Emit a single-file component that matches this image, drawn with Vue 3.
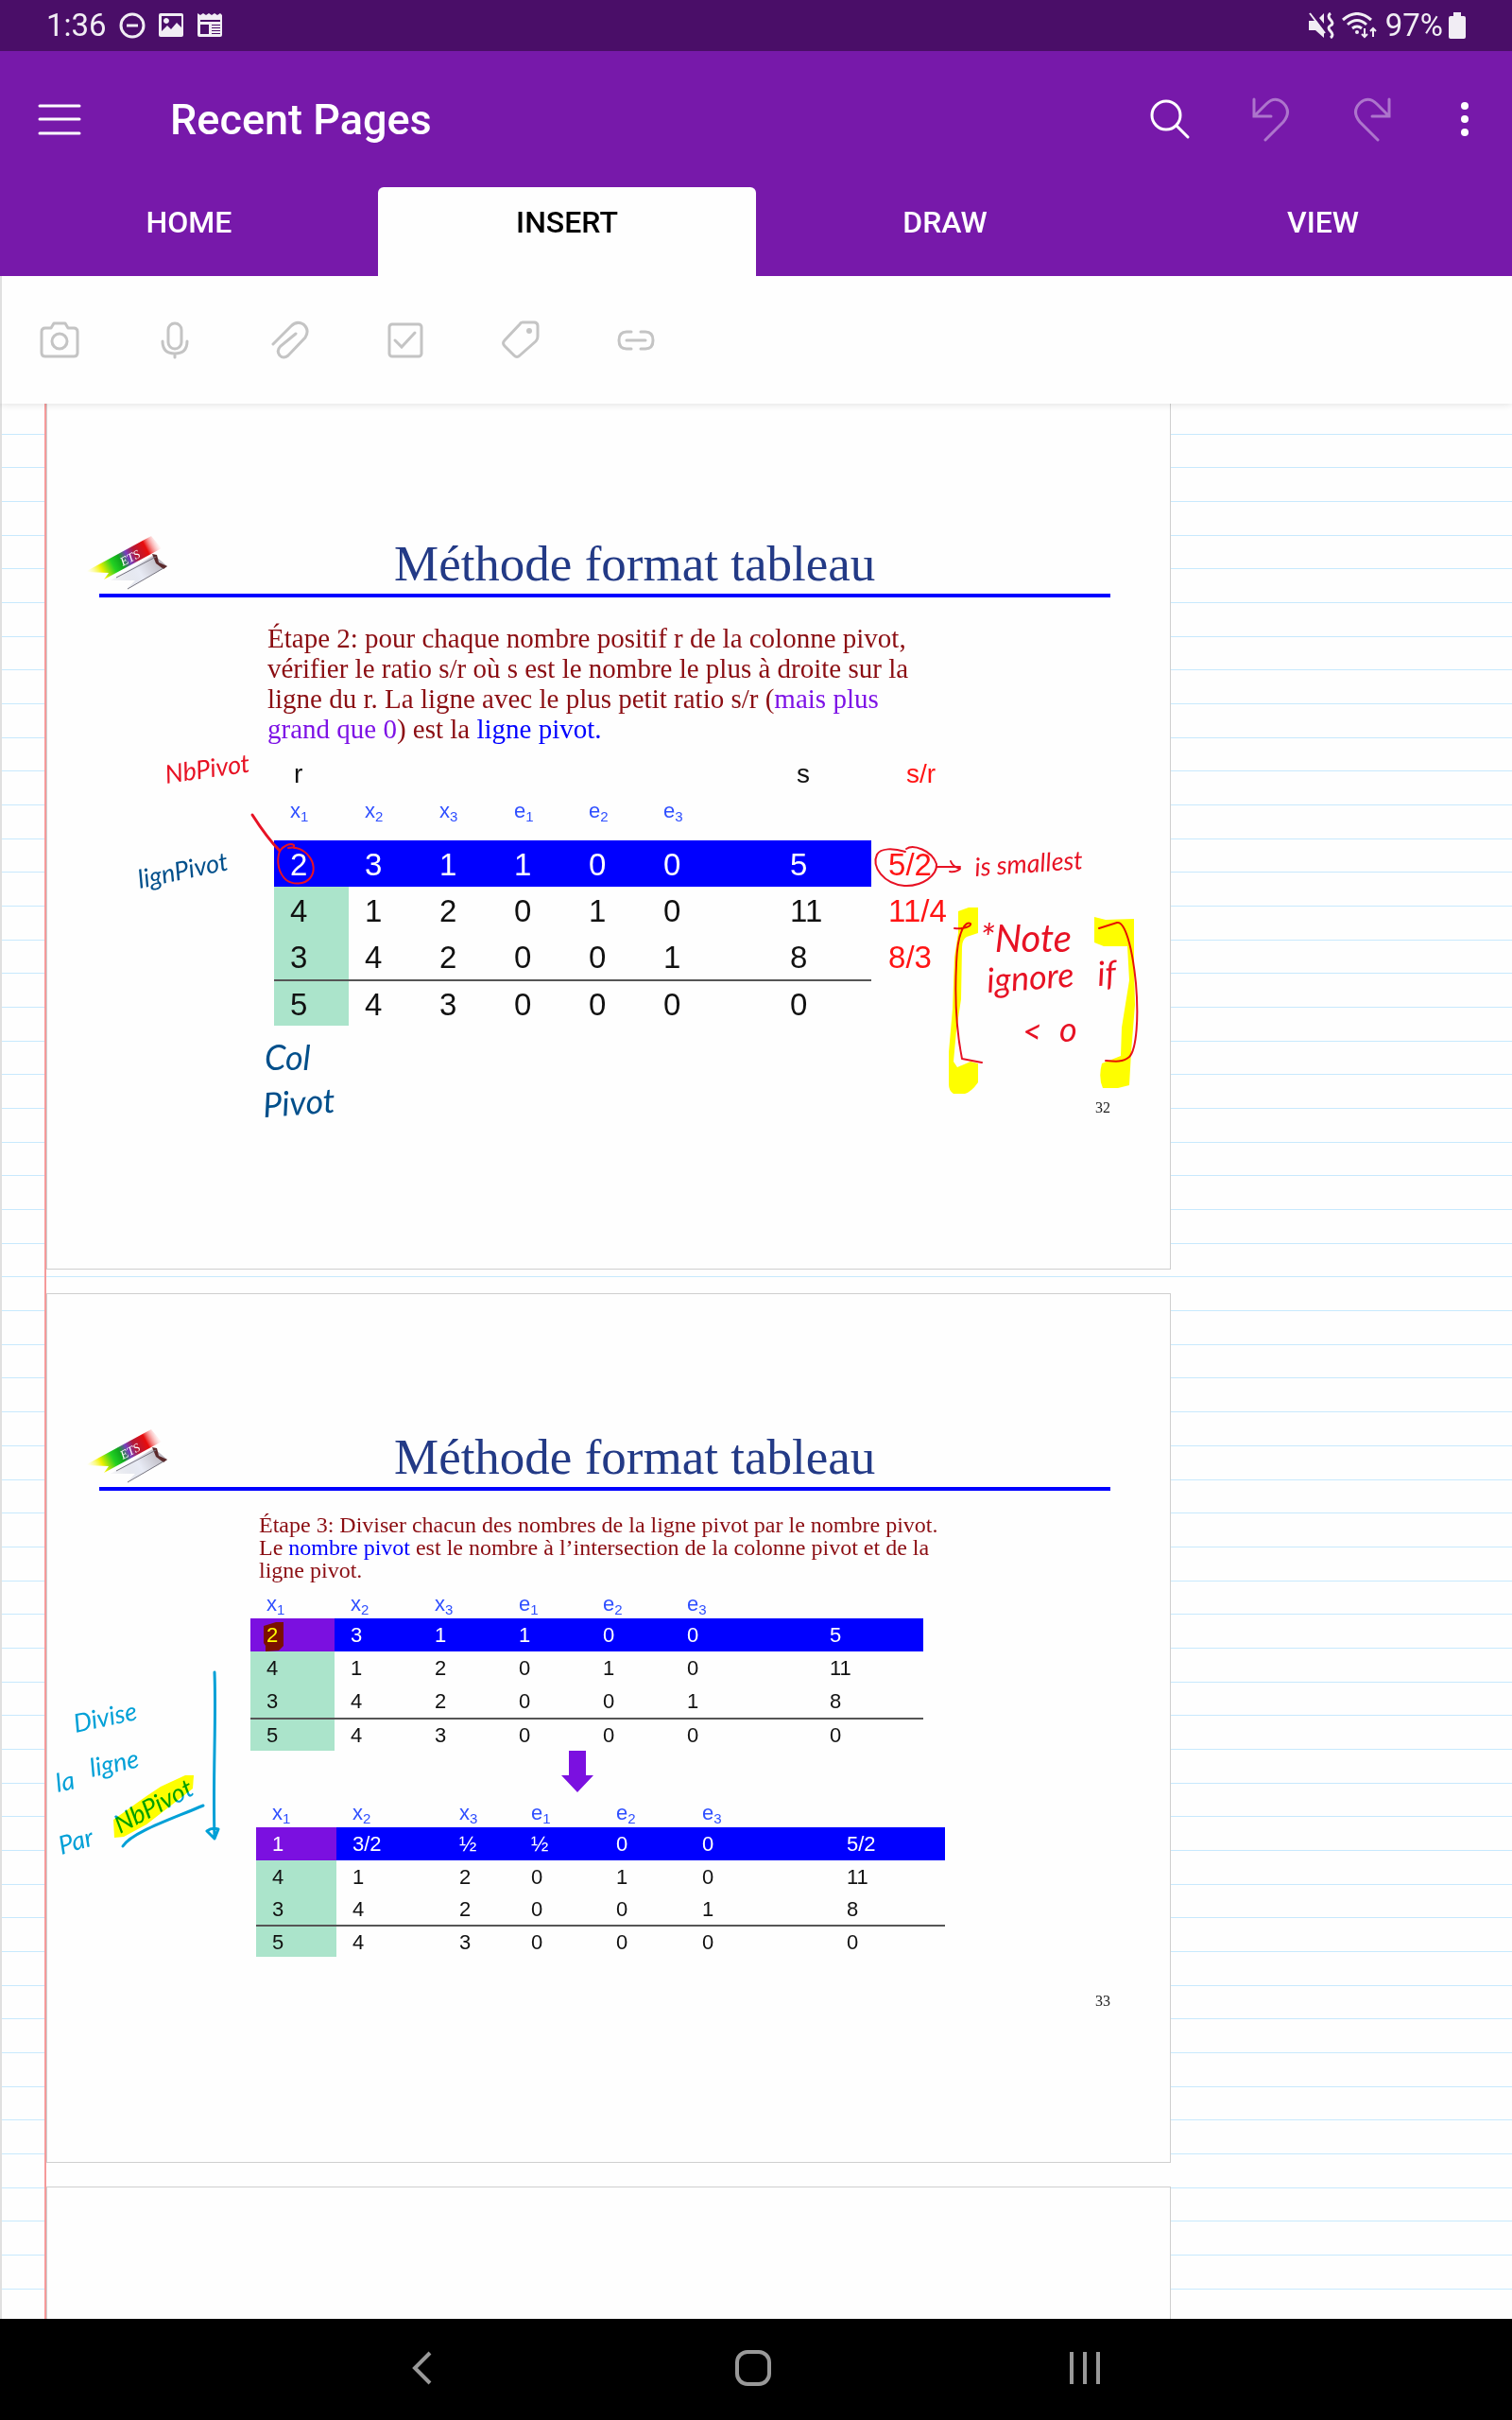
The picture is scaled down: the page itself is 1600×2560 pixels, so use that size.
<script setup>
const tabs = ['HOME', 'INSERT', 'DRAW', 'VIEW']
const activeTab = 'INSERT'

const variables = [
  ['x', 1], ['x', 2], ['x', 3], ['e', 1], ['e', 2], ['e', 3],
]

const ratioRows = [
  { cells: ['2', '3', '1', '1', '0', '0', '5'], ratio: '5/2' },
  { cells: ['4', '1', '2', '0', '1', '0', '11'], ratio: '11/4' },
  { cells: ['3', '4', '2', '0', '0', '1', '8'], ratio: '8/3' },
  { cells: ['5', '4', '3', '0', '0', '0', '0'], ratio: '' },
]

const beforeRows = [
  ['2', '3', '1', '1', '0', '0', '5'],
  ['4', '1', '2', '0', '1', '0', '11'],
  ['3', '4', '2', '0', '0', '1', '8'],
  ['5', '4', '3', '0', '0', '0', '0'],
]

const afterRows = [
  ['1', '3/2', '½', '½', '0', '0', '5/2'],
  ['4', '1', '2', '0', '1', '0', '11'],
  ['3', '4', '2', '0', '0', '1', '8'],
  ['5', '4', '3', '0', '0', '0', '0'],
]

const divisions = [
  { name: 'before', rows: beforeRows },
  { name: 'after', rows: afterRows },
]

const ruleCount = 56
</script>

<template>
  <div class="app">
    <div class="status">
      <span class="status-text">1:36</span>
      <svg width="28" height="28" viewBox="0 0 28 28" fill="none" stroke="currentColor" stroke-width="3">
        <circle cx="14" cy="14" r="12" /><path d="M8 14H20" />
      </svg>
      <svg width="28" height="28" viewBox="0 0 28 28">
        <path fill="currentColor" fill-rule="evenodd" d="M3 1H25Q27 1 27 3V24Q27 26 25 26H3Q1 26 1 24V3Q1 1 3 1ZM4 20L10 14L14 18L20 11L25 16V4H4ZM9 6A3 3 0 1 1 8.9 6Z" />
      </svg>
      <svg width="28" height="28" viewBox="0 0 28 28">
        <path fill="currentColor" fill-rule="evenodd" d="M1 1L4 3L7 1L10 3L13 1L16 3L19 1L22 3L25 1L27 3V24Q27 26 25 26H3Q1 26 1 24ZM4 8V10H25V8ZM4 13V23H13V13ZM16 13V14H25V13ZM16 16V17H25V16ZM16 19V20H25V19ZM16 22V23H25V22Z" />
      </svg>
      <div class="status-right">
        <svg width="28" height="28" viewBox="0 0 28 28" fill="none" stroke="currentColor">
          <path fill="currentColor" stroke="none" d="M1 9H5L17 22V27L9 19H1ZM1 9H9L17 20V27L8 19H1ZM12 6L17 1V12Z" />
          <path stroke-width="2" d="M2 1L18 22" />
          <path stroke-width="3" d="M24 1Q20 4 24 8T24 14T24 20T24 27" />
        </svg>
        <svg width="38" height="28" viewBox="0 0 38 28" fill="none" stroke="currentColor" stroke-width="3">
          <path d="M1 8Q16 -5 31 8M6 13Q16 4 26 13M11 17Q16 13 21 17" />
          <circle cx="16" cy="21" r="2" fill="currentColor" stroke="none" />
          <path stroke-width="2" d="M24 17V26M21 23L24 26L27 23M33 26V17M30 20L33 17L36 20" />
        </svg>
        <span class="status-text percent">97%</span>
        <svg width="18" height="28" viewBox="0 0 18 28">
          <path fill="currentColor" d="M5 0H13V4H16Q18 4 18 6V26Q18 28 16 28H2Q0 28 0 26V6Q0 4 2 4H5Z" />
        </svg>
      </div>
    </div>

    <header class="header">
      <div class="title-row">
        <button class="icon-button menu" type="button" aria-label="Menu">
          <svg width="46" height="36" viewBox="0 0 46 36" stroke="currentColor" stroke-width="3" stroke-linecap="round">
            <path d="M2 4H44M2 18H44M2 33H44" />
          </svg>
        </button>
        <h1>Recent Pages</h1>
        <div class="actions">
          <button class="icon-button" type="button" aria-label="Search">
            <svg width="44" height="44" viewBox="0 0 44 44" fill="none" stroke="currentColor" stroke-width="3" stroke-linecap="round">
              <circle cx="18" cy="18" r="15" /><path d="M29 29L41 41" />
            </svg>
          </button>
          <button class="icon-button" type="button" aria-label="Undo" disabled>
            <svg width="44" height="48" viewBox="0 0 44 48" fill="none" stroke="currentColor" stroke-width="3" stroke-linecap="round">
              <path d="M4 3V21H22M4 21L17 8Q26 -1 35 7Q44 16 35 27L16 46" />
            </svg>
          </button>
          <button class="icon-button" type="button" aria-label="Redo" disabled>
            <svg width="44" height="48" viewBox="0 0 44 48" fill="none" stroke="currentColor" stroke-width="3" stroke-linecap="round">
              <path d="M40 3V21H22M40 21L27 8Q18 -1 9 7Q0 16 9 27L28 46" />
            </svg>
          </button>
          <button class="icon-button more" type="button" aria-label="More options">
            <svg width="10" height="40" viewBox="0 0 10 40" fill="currentColor">
              <circle cx="5" cy="6" r="4" /><circle cx="5" cy="20" r="4" /><circle cx="5" cy="34" r="4" />
            </svg>
          </button>
        </div>
      </div>
      <nav class="tabs">
        <button v-for="tab in tabs" :key="tab" type="button" class="tab" :class="{ active: tab === activeTab }">{{ tab }}</button>
      </nav>
    </header>

    <div class="toolbar">
      <button class="tool" type="button" aria-label="Picture">
        <svg width="42" height="42" viewBox="0 0 42 42" fill="none" stroke="currentColor" stroke-width="3" stroke-linejoin="round">
          <path d="M12 8L15 3H27L30 8H36Q40 8 40 12V34Q40 38 36 38H6Q2 38 2 34V12Q2 8 6 8Z" /><circle cx="21" cy="22" r="8" />
        </svg>
      </button>
      <button class="tool" type="button" aria-label="Audio">
        <svg width="42" height="42" viewBox="0 0 42 42" fill="none" stroke="currentColor" stroke-width="3" stroke-linecap="round">
          <rect x="14" y="3" width="14" height="27" rx="7" /><path d="M8 22Q8 35 21 35T34 22M21 35V39" />
        </svg>
      </button>
      <button class="tool" type="button" aria-label="Attachment">
        <svg width="42" height="42" viewBox="0 0 42 42" fill="none" stroke="currentColor" stroke-width="3" stroke-linecap="round">
          <path d="M3 25L22 6Q28 0 35 4Q42 10 37 18L19 37Q14 41 10 37Q6 32 11 27L27 14" />
        </svg>
      </button>
      <button class="tool" type="button" aria-label="To-do">
        <svg width="42" height="42" viewBox="0 0 42 42" fill="none" stroke="currentColor" stroke-width="3" stroke-linecap="round">
          <rect x="4" y="4" width="34" height="34" rx="3" /><path d="M10 21L17 28L31 13" />
        </svg>
      </button>
      <button class="tool" type="button" aria-label="Tag">
        <svg width="42" height="42" viewBox="0 0 42 42" fill="none" stroke="currentColor" stroke-width="3" stroke-linejoin="round">
          <path d="M23 2H35Q39 2 39 6V17Q39 20 37 22L20 37Q17 40 14 37L4 27Q1 24 4 21L20 4Q21 2 23 2Z" /><circle cx="30" cy="11" r="3" fill="currentColor" stroke="none" />
        </svg>
      </button>
      <button class="tool" type="button" aria-label="Link">
        <svg width="42" height="42" viewBox="0 0 42 42" fill="none" stroke="currentColor" stroke-width="3" stroke-linecap="round">
          <path d="M16 12H11Q3 12 3 21T11 30H16M26 12H31Q39 12 39 21T31 30H26M11 21H31" />
        </svg>
      </button>
    </div>

    <main class="canvas">
      <div class="rules"><div v-for="n in ruleCount" :key="n" class="rule"></div></div>

      <div class="pages">
        <section class="page slide">
          <header class="slide-head">
            <svg class="logo" width="96" height="60" viewBox="0 0 96 60">
              <defs>
                <linearGradient id="ribbon" x1="10" y1="44" x2="82" y2="6" gradientUnits="userSpaceOnUse">
                  <stop offset="0" stop-color="#ffff66" stop-opacity="0" /><stop offset="0.18" stop-color="#f0f000" />
                  <stop offset="0.34" stop-color="#22d022" /><stop offset="0.45" stop-color="#10a81c" />
                  <stop offset="0.56" stop-color="#7a3cc0" /><stop offset="0.66" stop-color="#b01a3a" />
                  <stop offset="0.82" stop-color="#e80c0c" /><stop offset="1" stop-color="#ffb0b0" stop-opacity="0" />
                </linearGradient>
                <linearGradient id="blade" x1="42" y1="58" x2="88" y2="28" gradientUnits="userSpaceOnUse">
                  <stop offset="0" stop-color="#c8ccd8" stop-opacity="0.2" /><stop offset="0.5" stop-color="#e8ebf5" />
                  <stop offset="1" stop-color="#b8b4bc" />
                </linearGradient>
              </defs>
              <path d="M32 48L78 21L92 33L48 58L58 48Z" fill="url(#blade)" />
              <path d="M76 20L81 21L83 29L92 33L88 36L80 30Z" fill="#5b2a2c" />
              <path d="M88 35L50 57M38 45L80 23" stroke="#777580" fill="none" />
              <path d="M5 39L75 1L86 14L25 47L30 40Z" fill="url(#ribbon)" />
              <text x="45" y="33" class="logo-text" transform="rotate(-28 45 33)">ETS</text>
            </svg>
            <h2>Méthode format tableau</h2>
          </header>
          <div class="body ratio-body">
            <p class="step">Étape 2: pour chaque nombre positif r de la colonne pivot, vérifier le ratio s/r où s est le nombre le plus à droite sur la ligne du r. La ligne avec le plus petit ratio s/r (<span class="violet">mais plus grand que 0</span>) est la <span class="blue">ligne pivot.</span></p>
            <table class="tableau ratio">
              <colgroup><col v-for="n in 6" :key="n" class="c-var" /><col class="c-value" /><col class="c-ratio" /></colgroup>
              <thead>
                <tr class="roles"><th>r</th><th colspan="5"></th><th>s</th><th class="red">s/r</th></tr>
                <tr class="names"><th v-for="v in variables" :key="v.join('')">{{ v[0] }}<sub>{{ v[1] }}</sub></th><th></th><th></th></tr>
              </thead>
              <tbody>
                <tr v-for="(row, i) in ratioRows" :key="i">
                  <td v-for="(cell, j) in row.cells" :key="j">{{ cell }}</td>
                  <td class="red">{{ row.ratio }}</td>
                </tr>
              </tbody>
            </table>
          </div>
          <footer class="page-number">32</footer>
        </section>

        <section class="page slide">
          <header class="slide-head">
            <svg class="logo" width="96" height="60" viewBox="0 0 96 60">
              <path d="M32 48L78 21L92 33L48 58L58 48Z" fill="url(#blade)" />
              <path d="M76 20L81 21L83 29L92 33L88 36L80 30Z" fill="#5b2a2c" />
              <path d="M88 35L50 57M38 45L80 23" stroke="#777580" fill="none" />
              <path d="M5 39L75 1L86 14L25 47L30 40Z" fill="url(#ribbon)" />
              <text x="45" y="33" class="logo-text" transform="rotate(-28 45 33)">ETS</text>
            </svg>
            <h2>Méthode format tableau</h2>
          </header>
          <div class="body division-body">
            <p class="step">Étape 3: Diviser chacun des nombres de la ligne pivot par le nombre pivot. Le <span class="blue">nombre pivot</span> est le nombre à l’intersection de la colonne pivot et de la ligne pivot.</p>
            <template v-for="d in divisions" :key="d.name">
              <svg v-if="d.name === 'after'" class="down" width="34" height="44" viewBox="0 0 34 44">
                <path d="M8 0H26V26H34L17 44L0 26H8Z" fill="#7b10e0" />
              </svg>
              <table class="tableau division" :class="d.name">
                <colgroup><col v-for="n in 7" :key="n" :class="'c' + n" /></colgroup>
                <thead>
                  <tr class="names"><th v-for="v in variables" :key="v.join('')">{{ v[0] }}<sub>{{ v[1] }}</sub></th><th></th></tr>
                </thead>
                <tbody>
                  <tr v-for="(row, i) in d.rows" :key="i"><td v-for="(cell, j) in row" :key="j">{{ cell }}</td></tr>
                </tbody>
              </table>
            </template>
          </div>
          <footer class="page-number">33</footer>
        </section>

        <section class="page next"></section>
      </div>

      <div class="margin-line"></div>

      <!-- pen strokes and handwritten notes -->
      <svg class="ink" width="1600" height="2025" viewBox="0 427 1600 2025">
        <g class="pen red-ink">
          <path class="thick" d="M267 862C276 876 286 890 296 900" />
          <path d="M296 900C292 912 295 924 303 931C310 936 322 936 328 929C334 922 332 912 327 906C322 899 313 895 305 897M296 900C300 895 307 891 311 894V897" />
          <path d="M958 901C945 897 932 897 928 904C922 917 935 935 957 937C976 938 992 926 991 914C986 899 966 893 959 898M991 917H1016M1006 911Q1008 917 1016 919Q1012 923 1005 922" />
          <path d="M1010 982C1020 983 1028 980 1027 977C1022 974 1013 984 1012 1020C1010 1060 1012 1090 1018 1120L1039 1124" />
          <path d="M1163 982L1182 976C1190 974 1198 1000 1202 1040C1205 1075 1203 1110 1195 1118C1188 1124 1180 1123 1170 1122" />
        </g>
        <g class="pen cyan-ink">
          <path d="M227 1769C229 1820 225 1880 227 1944M219 1937Q224 1933 231 1935L227 1945L219 1937" />
          <path d="M130 1953C140 1938 180 1925 215 1910" />
        </g>
        <g class="note red-note">
          <text x="176" y="829" class="size-m" transform="rotate(-8 176 829)">NbPivot</text>
          <text x="1032" y="927" class="size-m" transform="rotate(-4 1032 927)">is smallest</text>
          <text x="1037" y="1007" class="size-xl">*Note</text>
          <text x="1045" y="1050" class="size-l" transform="rotate(-4 1045 1050)">ignore</text>
          <text x="1162" y="1043" class="size-l" transform="rotate(-4 1162 1043)">if</text>
          <text x="1082" y="1104" class="size-l">&lt;</text>
          <text x="1121" y="1102" class="size-l">o</text>
        </g>
        <g class="note navy-note">
          <text x="148" y="940" class="size-m" transform="rotate(-12 148 940)">lignPivot</text>
          <text x="280" y="1132" class="size-l">Col</text>
          <text x="279" y="1182" class="size-l" transform="rotate(-4 279 1182)">Pivot</text>
        </g>
        <g class="note cyan-note">
          <text x="80" y="1833" class="size-m" transform="rotate(-12 80 1833)">Divise</text>
          <text x="61" y="1896" class="size-m" transform="rotate(-12 61 1896)">la</text>
          <text x="97" y="1880" class="size-m" transform="rotate(-12 97 1880)">ligne</text>
          <text x="65" y="1962" class="size-m" transform="rotate(-16 65 1962)">Par</text>
          <text x="127" y="1940" class="size-m" transform="rotate(-28 127 1940)">NbPivot</text>
        </g>
      </svg>
      <svg class="ink highlighter" width="1600" height="2025" viewBox="0 427 1600 2025" fill="#ffff00">
        <path d="M1014 964L1025 960H1035V987L1023 991Q1018 994 1018 1002L1017 1057L1012 1090L1009 1123L1013 1129L1027 1123L1035 1125V1145Q1028 1155 1021 1157H1009Q1004 1154 1004 1147V1113L1008 1067L1010 1013L1014 987Z" />
        <path d="M1158 970L1170 973L1200 972V1020L1201 1063L1197 1113L1195 1148L1183 1151H1167Q1162 1140 1166 1125L1186 1117L1187 1087L1195 1037L1193 1001H1168L1158 997Z" />
        <path d="M120 1925L155 1900L170 1890L196 1878H205L204 1892L155 1930L131 1943L121 1944Z" />
        <path d="M279 1720L292 1716H300V1741L295 1746L281 1747V1741L279 1738Z" />
      </svg>
    </main>

    <nav class="system-nav">
      <button type="button" aria-label="Back">
        <svg width="40" height="40" viewBox="0 0 40 40" fill="none" stroke="currentColor" stroke-width="4"><path d="M29 4L13 20L29 36" /></svg>
      </button>
      <button type="button" aria-label="Home">
        <svg width="40" height="40" viewBox="0 0 40 40" fill="none" stroke="currentColor" stroke-width="4"><rect x="3" y="3" width="34" height="34" rx="11" /></svg>
      </button>
      <button type="button" aria-label="Recents">
        <svg width="40" height="40" viewBox="0 0 40 40" fill="none" stroke="currentColor" stroke-width="4"><path d="M6 3V37M20 3V37M34 3V37" /></svg>
      </button>
    </nav>
  </div>
</template>

<style>
body { margin: 0; background: #fefefe; }
</style>

<style scoped>
.app { display: flex; flex-direction: column; min-height: 100vh; font-family: Roboto, sans-serif; background: #fefefe; }
button { border: 0; margin: 0; padding: 0; background: none; color: inherit; font: inherit; }
svg { display: block; flex: none; }

.status { display: flex; align-items: center; gap: 13px; height: 54px; padding: 0 49px; background: #4a0e68; color: #f1edf4; }
.status-text { font-size: 33px; line-height: 56px; }
.status-right { display: flex; align-items: center; gap: 8px; margin-left: auto; }
.percent { margin-right: -2px; }

.header { background: #7719aa; color: #fff; }
.title-row { display: flex; align-items: center; height: 144px; padding: 0 45px 0 40px; }
.menu { margin-right: 94px; }
h1 { margin: 0; padding-top: 2px; font-size: 45px; line-height: 60px; font-weight: 500; }
.actions { display: flex; align-items: center; gap: 63px; margin-left: auto; }
.actions .icon-button:disabled { color: #ad75cc; }
.more { margin-left: 8px; }
.tabs { display: grid; grid-template-columns: repeat(4, 1fr); height: 94px; }
.tab { padding-bottom: 20px; font-size: 32px; font-weight: 500; color: #fff; border-radius: 6px 6px 0 0; }
.tab.active { background: #fefefe; color: #000; }

.toolbar { display: flex; align-items: center; height: 135px; border-left: 2px solid #e0e0e0; box-sizing: border-box; background: #fefefe; position: relative; z-index: 1; box-shadow: 0 0 8px rgba(0, 0, 0, 0.14); clip-path: inset(0 0 -12px 0); }
.tool { display: flex; justify-content: center; width: 122px; color: #c4c4c4; }

.canvas { position: relative; flex: 1; display: flex; overflow: hidden; border-left: 2px solid #e0e0e0; }
.rules { position: absolute; inset: -3px 0 31px 0; display: flex; flex-direction: column; }
.rule { flex: 1; box-sizing: border-box; border-bottom: 1px solid #c8e9fd; }
.margin-line { position: absolute; top: 0; bottom: 0; left: 45px; width: 2px; background: #f59a9a; }
.pages { position: relative; display: flex; flex-direction: column; gap: 25px; flex: 0 1 1190px; margin: -4px 0 0 47px; }
.page { box-sizing: border-box; border: 1px solid #cfcfcf; background: #fefefe; }
.next { flex: 1; min-height: 140px; border-bottom: 0; }

.slide { display: flex; flex-direction: column; min-height: 920px; padding: 142px 63px 160px 55px; font-family: "Liberation Serif", serif; }
.slide-head { display: flex; gap: 236px; padding-bottom: 2px; border-bottom: 4px solid #0000ff; }
.logo { margin-left: -20px; }
.logo-text { font: italic 13px "Liberation Serif", serif; fill: #fff; }
h2 { margin: 0; padding-top: 1px; font-size: 53px; line-height: 59px; font-weight: 400; color: #233a86; white-space: nowrap; }
.step { margin: 0; color: #8b0d12; }
.violet { color: #7d12e6; }
.blue { color: #0000ff; }
.page-number { margin-top: auto; text-align: right; font-size: 16px; line-height: 20px; color: #222; }

.ratio-body { padding: 27px 0 0 178px; }
.ratio-body .step { max-width: 690px; font-size: 29px; line-height: 32px; margin-bottom: 16px; }

.tableau { border-collapse: separate; border-spacing: 0; table-layout: fixed; font-family: "Liberation Sans", sans-serif; color: #111; }
.tableau th, .tableau td { box-sizing: border-box; padding: 0 0 0 17px; text-align: left; font-weight: 400; white-space: nowrap; }
.names th { color: #2f4fff; font-size: 22px; line-height: 24px; }
sub { font-size: 15px; line-height: 0; vertical-align: -4px; }
tbody tr:first-child td { background: #0000ff; color: #fff; }
tbody tr:not(:first-child) td:first-child { background: #abe4cb; }
tbody tr:last-child td { border-top: 2px solid #555; }

.ratio { width: 752px; margin-left: 7px; }
.c-var { width: 79px; }
.c-value { width: 158px; }
.c-ratio { width: 120px; }
.ratio .roles th { height: 32px; padding-left: 21px; font-size: 28px; line-height: 32px; }
.ratio .roles th:nth-child(3) { padding-left: 79px; }
.ratio .roles th:nth-child(4) { padding-left: 37px; }
.ratio .names th { height: 54px; padding-bottom: 8px; }
.ratio td { height: 49px; padding-top: 2px; font-size: 33px; line-height: 38px; }
.ratio td:nth-child(7) { padding-left: 72px; }
.ratio td:nth-child(8) { padding-left: 18px; }
.ratio .red, .ratio tbody tr td.red { color: #ff1414; background: none; border: 0; }

.division-body { padding: 24px 0 0 160px; }
.division-body .step { padding-left: 9px; max-width: 730px; font-size: 24px; line-height: 24px; margin-bottom: 8px; }
.division .names th { height: 31px; }
.division td { height: 35px; font-size: 22px; line-height: 25px; }
.division tbody tr:first-child td:first-child { background: #7b10e0; }
.before { width: 712px; }
.before .c1, .before .c2, .before .c3, .before .c4, .before .c5, .before .c6 { width: 89px; }
.before .c7 { width: 178px; }
.before td:nth-child(7) { padding-left: 79px; }
.down { margin: 0 0 6px 329px; }
.after { width: 729px; margin-left: 6px; }
.after tr:not(:first-child) td { height: 34px; }
.after .c1 { width: 85px; }
.after .c2 { width: 113px; }
.after .c3 { width: 76px; }
.after .c4 { width: 90px; }
.after .c5, .after .c6 { width: 91px; }
.after .c7 { width: 183px; }
.after td:nth-child(7) { padding-left: 79px; }

.ink { position: absolute; top: 0; left: -2px; pointer-events: none; }
.highlighter { mix-blend-mode: multiply; }
.pen { fill: none; stroke-width: 2; stroke-linecap: round; stroke-linejoin: round; }
.thick { stroke-width: 3; }
.red-ink { stroke: #e71224; }
.cyan-ink { stroke: #00a0d7; stroke-width: 3; }
.note { font-family: Lato, sans-serif; font-style: italic; font-weight: 400; }
.red-note { fill: #e71224; }
.navy-note { fill: #004f8b; }
.cyan-note { fill: #00a0d7; }
.size-m { font-size: 27px; }
.size-l { font-size: 36px; }
.size-xl { font-size: 40px; }

.system-nav { display: flex; justify-content: center; gap: 311px; height: 108px; padding: 0 6px 4px 0; box-sizing: border-box; align-items: center; background: #000; color: #999; }
</style>
